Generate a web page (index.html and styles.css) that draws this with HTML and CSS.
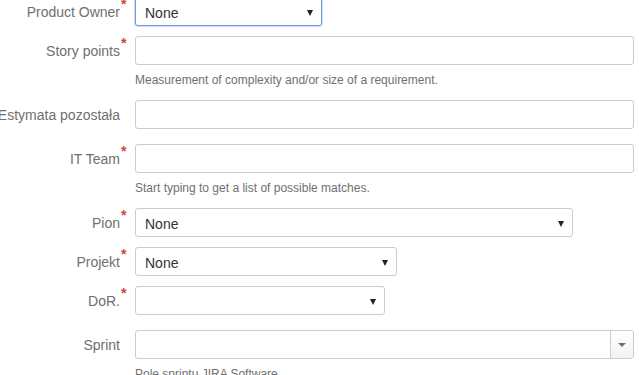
FILE: index.html
```html
<!DOCTYPE html>
<html lang="pl">
<head>
<meta charset="UTF-8">
<meta name="viewport" content="width=device-width, initial-scale=1.0">
<title>Edit issue</title>
<link rel="stylesheet" href="styles.css">
</head>
<body>
<form class="issue-form">
    <!-- Product Owner -->
    <div class="row">
        <label class="label"><span class="txt">Product Owner<span class="req">*</span></span></label>
        <div class="field">
            <div class="select focused w-po"><span>None</span><i class="arrow"></i></div>
        </div>
    </div>

    <div class="row with-desc">
        <label class="label"><span class="txt">Story points<span class="req">*</span></span></label>
        <div class="field">
            <div class="input w-full"></div>
            <div class="desc">Measurement of complexity and/or size of a requirement.</div>
        </div>
    </div>

    <div class="row wide">
        <label class="label"><span class="txt">Estymata pozostała</span></label>
        <div class="field">
            <div class="input w-full"></div>
        </div>
    </div>

    <div class="row with-desc">
        <label class="label"><span class="txt">IT Team<span class="req">*</span></span></label>
        <div class="field">
            <div class="input w-full"></div>
            <div class="desc">Start typing to get a list of possible matches.</div>
        </div>
    </div>

    <div class="row">
        <label class="label"><span class="txt">Pion<span class="req">*</span></span></label>
        <div class="field">
            <div class="select w-pion"><span>None</span><i class="arrow"></i></div>
        </div>
    </div>

    <div class="row">
        <label class="label"><span class="txt">Projekt<span class="req">*</span></span></label>
        <div class="field">
            <div class="select w-projekt"><span>None</span><i class="arrow"></i></div>
        </div>
    </div>

    <div class="row wide">
        <label class="label"><span class="txt">DoR.<span class="req">*</span></span></label>
        <div class="field">
            <div class="select w-dor"><span></span><i class="arrow"></i></div>
        </div>
    </div>

    <div class="row with-desc">
        <label class="label"><span class="txt">Sprint</span></label>
        <div class="field">
            <div class="combo w-full">
                <div class="combo-text"></div>
                <div class="combo-btn"><i class="arrow grey"></i></div>
            </div>
            <div class="desc">Pole sprintu JIRA Software</div>
        </div>
    </div>
</form>
</body>
</html>
```

FILE: styles.css
```css
body {
    margin: 0;
    padding: 0;
    background: #ffffff;
    font-family: "Liberation Sans", Arial, sans-serif;
    font-size: 14px;
    color: #333333;
    overflow: hidden;
}

.issue-form {
    margin-top: -3px;
}

.row {
    display: grid;
    grid-template-columns: 120px 1fr;
    column-gap: 15px;
    margin-bottom: 10px;
}
.row.wide {
    margin-bottom: 15px;
}
.row.with-desc {
    margin-bottom: 12px;
}

/* flex-end lets long labels spill out to the left */
.label {
    display: flex;
    justify-content: flex-end;
    height: 29px;
    line-height: 31px;
    color: #707070;
    white-space: nowrap;
}
.label .txt {
    position: relative;
}
.label .req {
    position: absolute;
    left: 100%;
    top: -8px;
    margin-left: 1px;
    color: #d04437;
    font-size: 14px;
    font-weight: bold;
}

.input,
.select,
.combo {
    box-sizing: border-box;
    height: 29px;
    border: 1px solid #cccccc;
    border-radius: 3px;
    background: #ffffff;
}

.select {
    display: flex;
    align-items: center;
    justify-content: space-between;
    padding: 2px 8px 0 9px;
}
.select.focused {
    border-color: #6e9fdc;
    box-shadow: 0 0 0 1px rgba(110, 159, 220, 0.35);
}

.arrow {
    display: block;
    width: 0;
    height: 0;
    border-left: 3px solid transparent;
    border-right: 3px solid transparent;
    border-top: 6px solid #222222;
}
.arrow.grey {
    border-left-width: 4px;
    border-right-width: 4px;
    border-top: 4px solid #707070;
}

.combo {
    display: flex;
}
.combo-text {
    flex: 1;
}
.combo-btn {
    width: 22px;
    border-left: 1px solid #cccccc;
    background: linear-gradient(#ffffff, #f2f2f2);
    border-radius: 0 3px 3px 0;
    display: flex;
    align-items: center;
    justify-content: center;
}

.desc {
    margin-top: 7px;
    height: 16px;
    line-height: 16px;
    font-size: 12px;
    color: #707070;
}

.w-full { width: 499px; }
.w-po { width: 187px; }
.w-pion { width: 438px; }
.w-projekt { width: 262px; }
.w-dor { width: 250px; }
```
